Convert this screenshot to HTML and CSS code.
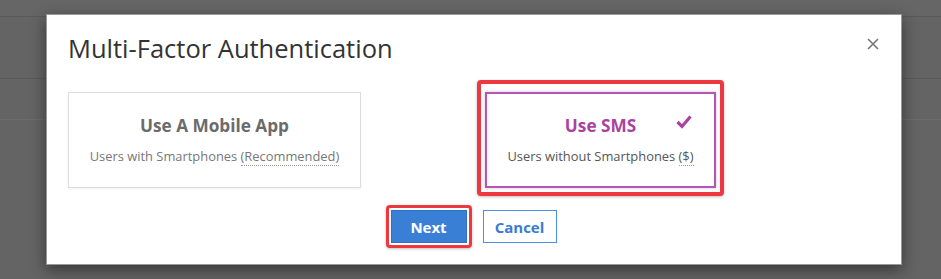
FILE: index.html
```html
<!DOCTYPE html>
<html lang="en">

<head>
    <meta charset="UTF-8">
    <title>Multi-Factor Authentication</title>
    <link rel="stylesheet" href="styles.css">
</head>

<body>
    <div id="backdrop">
        <div class="bgRow topRow"></div>
        <div class="bgRow"></div>
        <div class="bgRow shortRow"></div>
    </div>

    <div id="modal">
        <h1 class="modalTitle">Multi-Factor Authentication</h1>
        <button class="close" type="button" aria-label="Close">
            <svg width="12" height="12" viewBox="0 0 12 12">
                <path d="M1 1 L11 11 M11 1 L1 11" stroke="#777" stroke-width="1.6" fill="none" />
            </svg>
        </button>

        <div class="options">
            <div class="option">
                <h2>Use A Mobile App</h2>
                <p>Users with Smartphones <abbr title="Recommended">(Recommended)</abbr></p>
            </div>
            <div class="mark markCard">
                <div class="option selectedOption">
                    <h2>Use SMS</h2>
                    <svg class="check" width="16" height="14" viewBox="0 0 16 14">
                        <path d="M1.5 7 L6 11.5 L14.5 1.5" stroke="#a9439f" stroke-width="3.2" fill="none" />
                    </svg>
                    <p>Users without Smartphones <abbr title="Charges apply">($)</abbr></p>
                </div>
            </div>
        </div>

        <div class="actions">
            <span class="mark markBtn"><button class="btn primary" type="button">Next</button></span>
            <button class="btn secondary" type="button">Cancel</button>
        </div>
    </div>
</body>

</html>
```

FILE: styles.css
```css
* {
    margin: 0;
    padding: 0;
    box-sizing: border-box;
}

body {
    background-color: #646464;
    font-family: "Open Sans", "Liberation Sans", sans-serif;
    color: #333;
}

#backdrop {
    width: 941px;
}

.bgRow {
    height: 62px;
    border-bottom: 1px solid #5a5a5a;
}

.topRow {
    height: 17px;
    background-color: #666;
}

.shortRow {
    height: 41px;
    border-bottom-color: #6c6c6c;
}

#modal {
    position: absolute;
    top: 14px;
    left: 46px;
    width: 856px;
    padding: 16px 22px 21px 21px;
    border: 1px solid #999;
    background-color: #fff;
    box-shadow: 0 5px 15px rgba(0, 0, 0, 0.45);
}

.modalTitle {
    font-size: 25.5px;
    font-weight: 400;
    line-height: 34px;
    color: #333;
}

.close {
    position: absolute;
    top: 23px;
    right: 22px;
    width: 12px;
    height: 12px;
    border: none;
    background: none;
    cursor: pointer;
}

.close svg {
    display: block;
}

.options {
    display: flex;
    align-items: flex-start;
    gap: 124px;
    margin-top: 27px;
}

.option {
    position: relative;
    width: 293px;
    height: 96px;
    padding-top: 21px;
    border: 1px solid #ddd;
    box-shadow: 0 1px 2px rgba(0, 0, 0, 0.06);
    text-align: center;
    cursor: pointer;
}

.option h2 {
    font-size: 17.2px;
    font-weight: 700;
    line-height: 24px;
    color: #6b6b6b;
}

.option p {
    margin-top: 9px;
    font-size: 12.9px;
    line-height: 18px;
    color: #777;
}

.option abbr {
    text-decoration: none;
    border-bottom: 1px dotted #999;
}

.selectedOption {
    width: 231px;
    padding-top: 20px;
    border: 2px solid #b556b4;
    box-shadow: 0 0 3px rgba(160, 60, 160, 0.35);
}

.selectedOption h2 {
    color: #a9439f;
}

.selectedOption p {
    color: #555;
}

.check {
    position: absolute;
    top: 21px;
    left: 189px;
}

/* red highlight boxes */
.mark {
    display: block;
    border: 4px solid #ec383e;
    border-radius: 4px;
    background-color: #fff;
    box-shadow: 0 1px 3px rgba(0, 0, 0, 0.25);
}

.markCard {
    margin: -12px -8px -8px;
    padding: 8px 4px 4px;
}

.markBtn {
    margin: -5px;
    padding: 2px;
    border-width: 3px;
}

.actions {
    display: flex;
    justify-content: center;
    align-items: center;
    gap: 16px;
    margin-top: 22px;
}

.btn {
    display: block;
    height: 33px;
    font-family: inherit;
    font-size: 15px;
    font-weight: 700;
    cursor: pointer;
}

.primary {
    width: 76px;
    border: 1px solid #3070c8;
    background-color: #3a7fd6;
    color: #fff;
}

.secondary {
    width: 74px;
    border: 1px solid #4a8fe0;
    background-color: #fff;
    color: #3a7bd2;
}
```
